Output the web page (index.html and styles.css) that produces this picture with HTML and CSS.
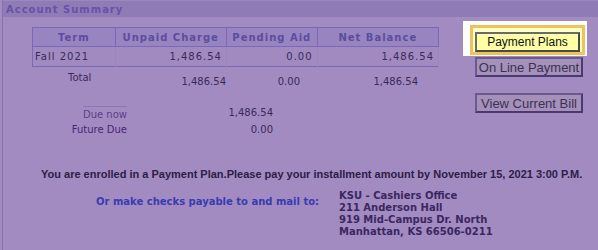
FILE: index.html
```html
<!DOCTYPE html>
<html lang="en">
<head>
    <meta charset="UTF-8">
    <title>Account Summary</title>
    <link rel="stylesheet" href="styles.css">
</head>
<body>
    <div class="panel">
        <div class="panel-head">Account Summary</div>
        <div class="panel-body">
            <div class="summary">
                <div class="left">
                    <table class="terms">
                        <tr>
                            <th class="c1">Term</th>
                            <th class="c2">Unpaid Charge</th>
                            <th class="c3">Pending Aid</th>
                            <th class="c4">Net Balance</th>
                        </tr>
                        <tr>
                            <td class="lft">Fall 2021</td>
                            <td>1,486.54</td>
                            <td>0.00</td>
                            <td>1,486.54</td>
                        </tr>
                    </table>

                    <div class="totals">
                        <span class="t-label">Total</span>
                        <span class="t-val t-unpaid">1,486.54</span>
                        <span class="t-val t-aid">0.00</span>
                        <span class="t-val t-net">1,486.54</span>
                    </div>

                    <div class="due">
                        <div class="due-row">
                            <span class="due-label due-now">Due now</span>
                            <span class="due-val">1,486.54</span>
                        </div>
                        <div class="due-row">
                            <span class="due-label">Future Due</span>
                            <span class="due-val">0.00</span>
                        </div>
                    </div>
                </div>

                <div class="actions">
                    <div class="focus-ring">
                        <div class="focus-frame">
                            <button class="btn btn-active">Payment Plans</button>
                        </div>
                    </div>
                    <button class="btn">On Line Payment</button>
                    <button class="btn btn-gap">View Current Bill</button>
                </div>
            </div>

            <p class="notice">You are enrolled in a Payment Plan.Please pay your installment amount by November 15, 2021 3:00 P.M.</p>

            <div class="mail">
                <div class="mail-label">Or make checks payable to and mail to:</div>
                <div class="address">
                    KSU - Cashiers Office<br>
                    211 Anderson Hall<br>
                    919 Mid-Campus Dr. North<br>
                    Manhattan, KS 66506-0211
                </div>
            </div>
        </div>
    </div>
</body>
</html>
```

FILE: styles.css
```css
/* Account summary panel */
html, body { margin: 0; padding: 0; }
body {
    background-color: #a28bc1;
    font-family: "DejaVu Sans", Verdana, sans-serif;
    font-size: 10px;
    color: #3a2a5a;
    width: 598px;
    height: 250px;
    overflow: hidden;
}

.panel {
    margin-left: 2px;
    border-left: 1px solid #8672ac;
    height: 250px;
    box-sizing: border-box;
}
.panel-head {
    height: 17px;
    line-height: 17px;
    background-color: #8f7cb6;
    border-top: 1px solid #9a87bd;
    box-sizing: border-box;
    padding-left: 3px;
    font-weight: bold;
    font-size: 10px;
    letter-spacing: 1px;
    color: #6553a6;
}

.panel-body { padding-top: 10px; }

.summary { display: flex; }
.left { width: 411px; padding-left: 29px; }

/* term table */
.terms {
    border-collapse: collapse;
    border: 1px solid #7a69b6;
    width: 407px;
}
.terms th {
    height: 18px;
    padding: 0;
    background-color: #9884c0;
    border: 1px solid #7a69b6;
    color: #5b4d9e;
    font-size: 10px;
    letter-spacing: 1px;
    font-weight: bold;
}
.terms td {
    height: 19px;
    padding: 0 4px;
    text-align: right;
    letter-spacing: 1px;
    border-right: 1px solid #9b86bc;
    background-color: #a08abf;
}
.terms td.lft { text-align: left; padding-left: 2px; }
.c1 { width: 82px; }
.c2 { width: 111px; }
.c3 { width: 90px; }
.c4 { width: 121px; }

/* total row */
.totals { position: relative; height: 26px; }
.t-label { position: absolute; left: 36px; top: 5px; }
.t-val { position: absolute; top: 9px; }
.t-unpaid { right: 217px; }
.t-aid { right: 143px; }
.t-net { right: 25px; }

/* due amounts */
.due { margin-top: 11px; width: 241px; }
.due-row { display: flex; justify-content: space-between; height: 17px; align-items: center; }
.due-label { width: 95px; text-align: right; color: #4a2574; }
.due-now {
    color: #5c4088;
    border-top: 1px solid #8a76b4;
    margin-left: 51px;
    width: 44px;
    padding-top: 2px;
}
.due-val { color: #3a2a5a; }

/* buttons */
.actions {
    display: flex;
    flex-direction: column;
    align-items: flex-start;
    margin-left: 20px;
    margin-top: -6px;
}
.focus-ring {
    background-color: #ffffff;
    padding: 4px 2px 1px 7px;
}
.focus-frame {
    border: 3px solid #f2c25a;
    background-color: #ffffc8;
    padding: 4px 2px 0 2px;
}
.btn {
    display: block;
    width: 108px;
    height: 20px;
    padding: 0;
    font-family: "Liberation Sans", Arial, sans-serif;
    font-size: 13px;
    color: #3b3055;
    background-color: #a590b9;
    border: 2px solid #4b3a72;
    border-top-color: #6a5a8e;
    border-left-color: #6a5a8e;
    margin-left: 12px;
    text-align: center;
    line-height: 15px;
}
.btn-active {
    margin-left: 0;
    width: 105px;
    color: #111111;
    font-size: 12px;
    background-color: #ffffa6;
    border-color: #4a4a4a;
    border-top-color: #6a6a6a;
    border-left-color: #6a6a6a;
}
.focus-ring + .btn { margin-top: 1px; }
.btn-gap { margin-top: 16px; }

/* message lines */
.notice {
    margin: 30px 0 0 38px;
    font-family: "Liberation Sans", Arial, sans-serif;
    font-weight: bold;
    font-size: 11px;
    white-space: nowrap;
    color: #2c2046;
}
.mail { display: flex; margin-top: 10px; }
.mail-label {
    width: 243px;
    padding-left: 93px;
    padding-top: 6px;
    font-weight: bold;
    font-size: 10px;
    color: #3a3ab2;
}
.address {
    font-weight: bold;
    font-size: 10px;
    line-height: 12px;
    color: #3a2760;
}
```
